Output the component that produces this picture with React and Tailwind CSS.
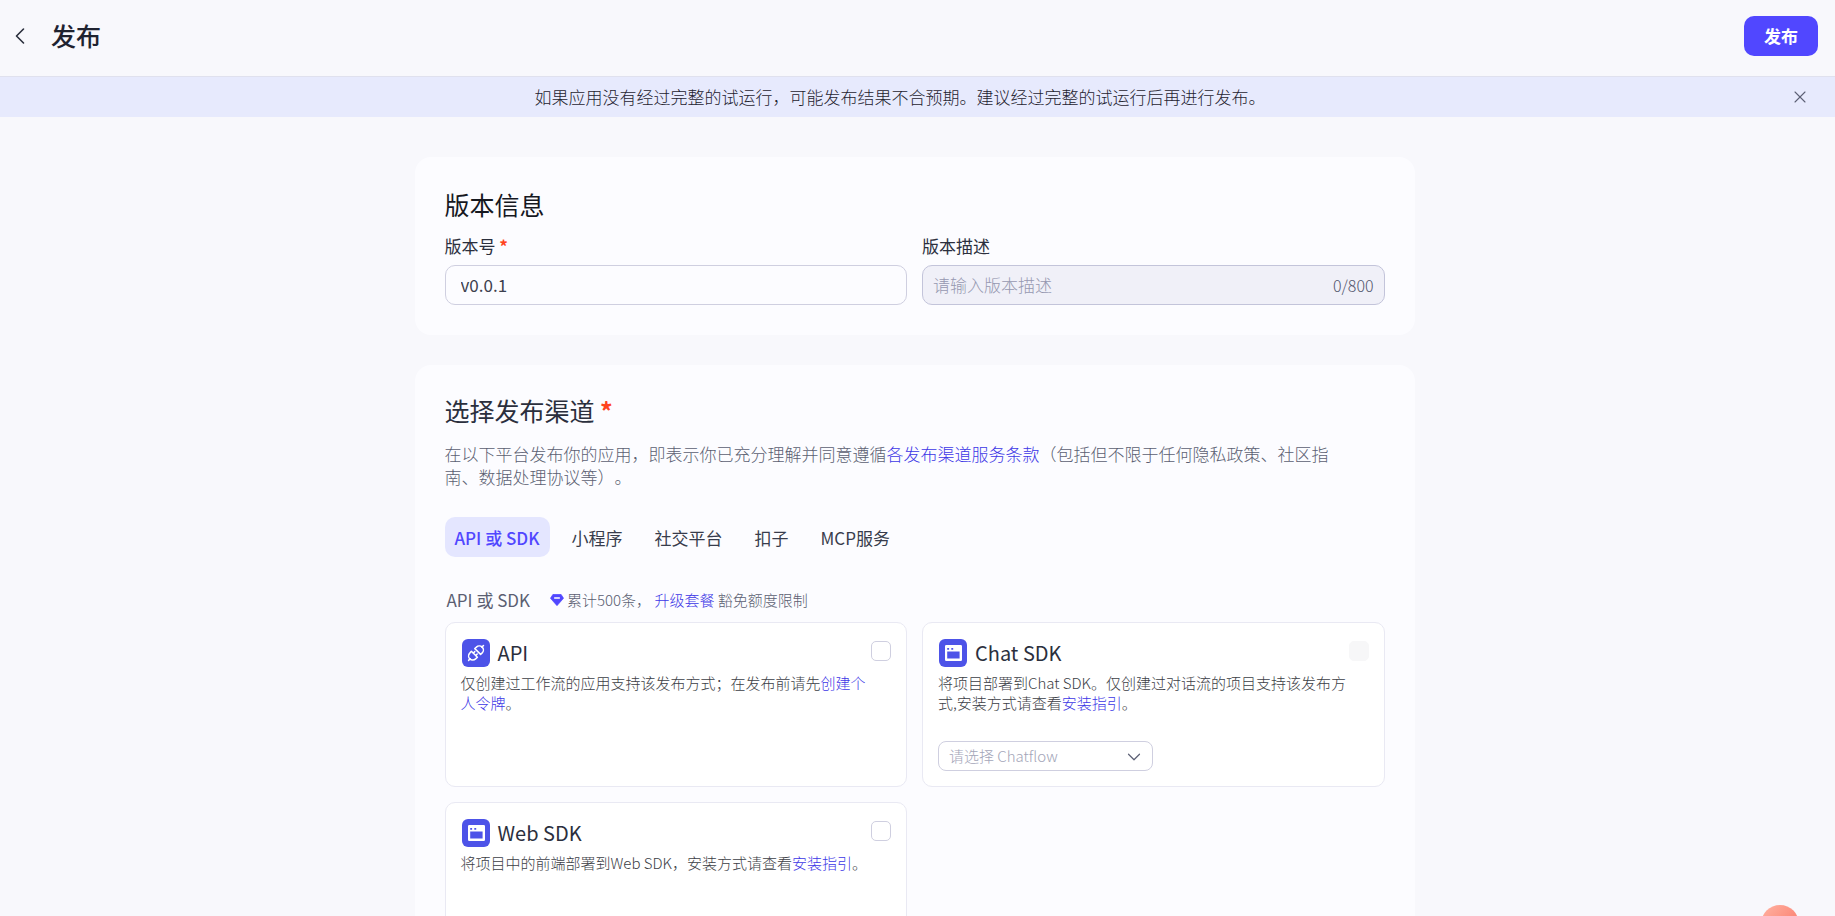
import { useState } from "react";
import { ChevronDown, ChevronLeft, X } from "lucide-react";

const TABS = ["API 或 SDK", "小程序", "社交平台", "扣子", "MCP服务"];

const ApiIcon = () => (
  <svg viewBox="0 0 28 28" className="w-7 h-7 shrink-0" aria-hidden="true">
    <rect width="28" height="28" rx="6" fill="#4d53e8" />
    <g fill="none" stroke="#fff" strokeWidth="1.5" strokeLinecap="round" strokeLinejoin="round">
      <path d="M9.4 12.2 15.4 18.2 13.6 19.9A4.1 4.1 0 0 1 7.8 14.1Z" />
      <path d="M12.8 9.6 18.6 15.4 20.2 13.9A4.1 4.1 0 0 0 14.4 8.1Z" />
      <path d="M6.6 21.4 8.2 19.8M19.9 8.1 21.5 6.5M11.4 14 12.8 12.6M13.8 16.4 15.2 15" />
    </g>
  </svg>
);

const WindowIcon = () => (
  <svg viewBox="0 0 28 28" className="w-7 h-7 shrink-0" aria-hidden="true">
    <rect width="28" height="28" rx="6" fill="#4d53e8" />
    <path
      fill="#fff"
      fillRule="evenodd"
      d="M7.2 6h14.6A1.2 1.2 0 0 1 23 7.2v13.6A1.2 1.2 0 0 1 21.8 22H7.2A1.2 1.2 0 0 1 6 20.8V7.2A1.2 1.2 0 0 1 7.2 6ZM8.2 12.6v7h12.4v-7ZM8.2 8.9v1.9h1.9V8.9ZM12.3 8.9v1.9h1.9V8.9Z"
    />
  </svg>
);

const DiamondIcon = () => (
  <svg viewBox="0 0 14 12" className="w-[14px] h-3 shrink-0" aria-hidden="true">
    <path d="M3 0.3h8L13.6 4.2 7 11.7 0.4 4.2Z" fill="#5147ff" stroke="#5147ff" strokeWidth="0.6" strokeLinejoin="round" />
    <path d="M4.6 4h4.8" stroke="#fff" strokeWidth="1.3" strokeLinecap="round" />
  </svg>
);

const TextLink = ({ children }) => (
  <a href="#" className="text-[#3d37e6]">{children}</a>
);

const Required = () => <span className="font-bold text-[#ff441e]">*</span>;

const ChannelCard = ({ id, icon, title, disabled, children, footer }) => (
  <li className="flex flex-col justify-between min-h-[165px] bg-white border border-[#e9e9f3] rounded-[10px] p-[15px]">
    <div className="flex items-start">
      <div className="flex-1 min-w-0">
        <label htmlFor={id} className="flex items-center gap-2 pt-px pl-px text-xl leading-7 text-[#2b2f3d]">
          {icon}
          {title}
        </label>
        <p className="mt-[6px] text-[15px] leading-5 font-light text-[#3c3e46]">{children}</p>
      </div>
      <input
        id={id}
        type="checkbox"
        disabled={disabled}
        className="appearance-none w-5 h-5 mt-[3px] shrink-0 rounded-[5px] border border-[#cfcfe0] bg-white checked:bg-[#5147ff] disabled:border-[#f7f7f8] disabled:bg-[#f7f7f8]"
      />
    </div>
    {footer}
  </li>
);

const App = () => {
  const [tab, setTab] = useState(TABS[0]);
  const [version, setVersion] = useState("v0.0.1");
  const [desc, setDesc] = useState("");
  const [showTip, setShowTip] = useState(true);

  return (
    <div className="flex flex-col h-screen overflow-hidden bg-[#f8f8fc] text-[#2b2f3d] text-[17px] leading-6 font-['Noto_Sans_CJK_SC','Noto_Sans',sans-serif] [text-spacing-trim:space-all]">
      <header className="flex items-center justify-between h-[77px] shrink-0 border-b border-[#e0e1ee] pl-[6px] pr-[17px] pb-1">
        <div className="flex items-center gap-[17px]">
          <button type="button" aria-label="返回" className="flex items-center justify-center w-7 h-7 text-[#2b2f3d]">
            <ChevronLeft size={28} strokeWidth={1.4} />
          </button>
          <h1 className="pb-[2px] text-[25px] leading-8 font-medium text-[#1f2330]">发布</h1>
        </div>
        <button type="button" className="h-10 px-5 rounded-[10px] bg-[#5147ff] text-white font-bold">发布</button>
      </header>

      {showTip && (
        <div role="status" className="flex items-center h-10 shrink-0 bg-[#e7eafd] pl-[10px] pr-[25px]">
          <p className="flex-1 text-center font-light text-[#1f2330]">
            如果应用没有经过完整的试运行，可能发布结果不合预期。建议经过完整的试运行后再进行发布。
          </p>
          <button type="button" aria-label="关闭" onClick={() => setShowTip(false)} className="text-[#5c6075]">
            <X size={20} strokeWidth={1.3} />
          </button>
        </div>
      )}

      <main className="flex-1 min-h-0 overflow-y-auto [scrollbar-width:none] pt-10 pb-8 pr-[6px]">
        <div className="flex flex-col gap-[30px] w-full max-w-[1000px] mx-auto">
          <section className="rounded-2xl bg-[#fcfcff] p-[30px]">
            <h2 className="text-[25px] leading-[35px] text-[#16181f]">版本信息</h2>
            <div className="grid grid-cols-2 gap-[15px] mt-3">
              <div className="flex flex-col gap-[7px]">
                <label htmlFor="version">
                  版本号 <Required />
                </label>
                <input
                  id="version"
                  value={version}
                  onChange={(e) => setVersion(e.target.value)}
                  className="w-full h-10 px-[15px] pb-[2px] rounded-[10px] border border-[#cfcfe0] bg-transparent text-[#3c404e] focus:outline-none"
                />
              </div>
              <div className="flex flex-col gap-[7px]">
                <label htmlFor="desc">版本描述</label>
                <div className="flex items-center h-10 px-[10px] rounded-[10px] border border-[#c3c4da] bg-[#f0f0f8]">
                  <input
                    id="desc"
                    value={desc}
                    maxLength={800}
                    onChange={(e) => setDesc(e.target.value)}
                    placeholder="请输入版本描述"
                    className="flex-1 min-w-0 bg-transparent font-light placeholder:text-[#9698b0] focus:outline-none"
                  />
                  <span className="text-base font-light text-[#53576e]">{desc.length}/800</span>
                </div>
              </div>
            </div>
          </section>

          <section className="rounded-2xl bg-[#fcfcff] p-[30px]">
            <h2 className="text-[25px] leading-[30px]">
              选择发布渠道 <Required />
            </h2>
            <p className="mt-[17px] pr-7 leading-[23px] font-light text-[#5b5f72]">
              在以下平台发布你的应用，即表示你已充分理解并同意遵循<TextLink>各发布渠道服务条款</TextLink>（包括但不限于任何隐私政策、社区指南、数据处理协议等）。
            </p>

            <div role="tablist" className="flex gap-3 mt-[29px]">
              {TABS.map((t) => (
                <button
                  key={t}
                  type="button"
                  role="tab"
                  aria-selected={t === tab}
                  onClick={() => setTab(t)}
                  className={`h-10 px-[10px] pt-[2px] rounded-[10px] ${t === tab ? "bg-[#e4e6ff] text-[#5147ff] font-medium" : "text-[#383c4c]"}`}
                >
                  {t}
                </button>
              ))}
            </div>

            <div className="flex items-center mt-[31px] pl-[2px] text-[15px] font-light text-[#5b5f72]">
              <h3 className="text-[17px] font-normal mr-5">API 或 SDK</h3>
              <DiamondIcon />
              <span className="ml-[3px]">累计500条， <TextLink>升级套餐</TextLink> 豁免额度限制</span>
            </div>

            <ul className="grid grid-cols-2 gap-[15px] mt-[10px]">
              <ChannelCard id="api" icon={<ApiIcon />} title="API">
                仅创建过工作流的应用支持该发布方式；在发布前请先<TextLink>创建个人令牌</TextLink>。
              </ChannelCard>
              <ChannelCard
                id="chat-sdk"
                icon={<WindowIcon />}
                title="Chat SDK"
                disabled
                footer={
                  <div className="relative w-[215px]">
                    <select
                      aria-label="请选择 Chatflow"
                      defaultValue=""
                      className="appearance-none w-full h-[30px] pl-[10px] pr-8 rounded-lg border border-[#cfcfe0] bg-white text-[15px] leading-5 font-light text-[#a3a5b8] focus:outline-none"
                    >
                      <option value="">请选择 Chatflow</option>
                    </select>
                    <ChevronDown size={22} strokeWidth={1.3} className="absolute right-2 top-[5px] text-[#5c6075] pointer-events-none" />
                  </div>
                }
              >
                将项目部署到Chat SDK。仅创建过对话流的项目支持该发布方式,安装方式请查看<TextLink>安装指引</TextLink>。
              </ChannelCard>
              <ChannelCard id="web-sdk" icon={<WindowIcon />} title="Web SDK">
                将项目中的前端部署到Web SDK，安装方式请查看<TextLink>安装指引</TextLink>。
              </ChannelCard>
            </ul>
          </section>
        </div>
      </main>

      <button
        type="button"
        aria-label="帮助"
        className="fixed right-9 -bottom-[27px] w-[38px] h-[38px] rounded-full bg-linear-to-br from-[#ffb3a3] to-[#f76c5e]"
      />
    </div>
  );
};

export default App;
